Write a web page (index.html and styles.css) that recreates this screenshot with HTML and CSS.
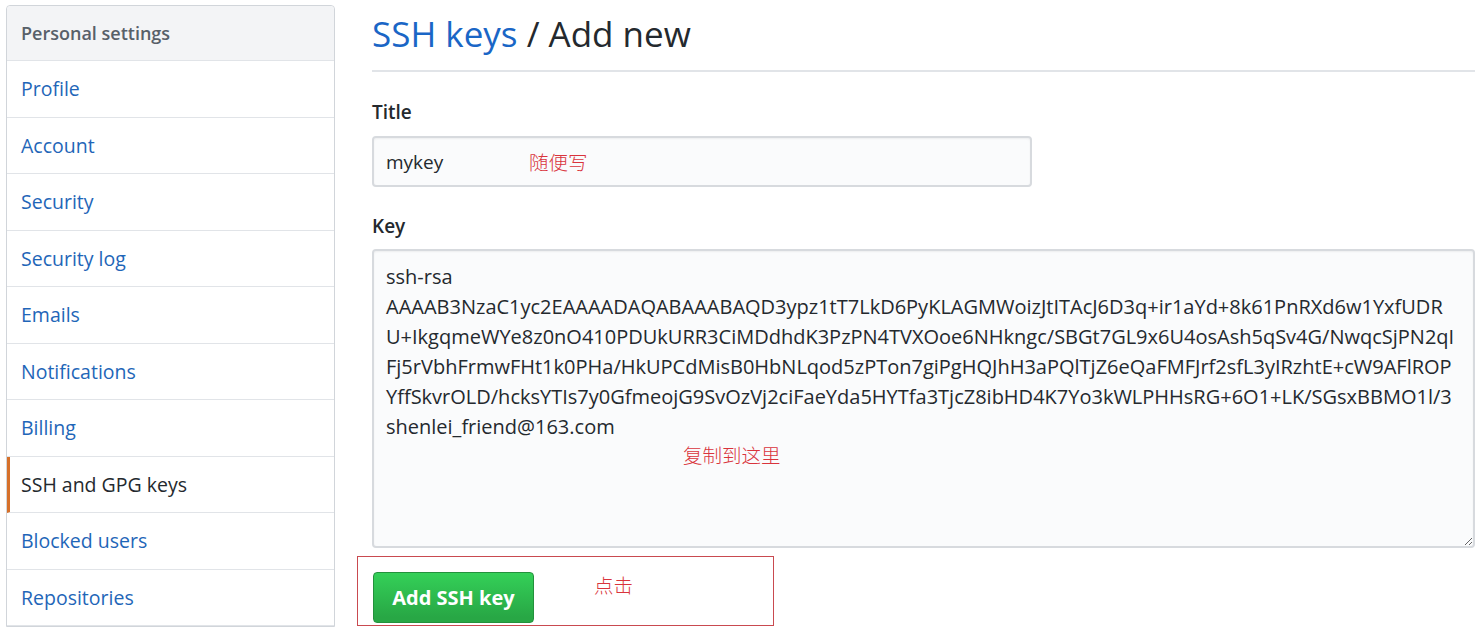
FILE: index.html
```html
<!DOCTYPE html>
<html lang="en">
<head>
    <meta charset="UTF-8">
    <title>SSH keys / Add new</title>
    <link rel="stylesheet" href="styles.css">
</head>
<body>
    <div class="layout">
        <nav class="sidebar">
            <div class="sidebar-head">Personal settings</div>
            <a class="menu-item" href="#">Profile</a>
            <a class="menu-item" href="#">Account</a>
            <a class="menu-item" href="#">Security</a>
            <a class="menu-item" href="#">Security log</a>
            <a class="menu-item" href="#">Emails</a>
            <a class="menu-item" href="#">Notifications</a>
            <a class="menu-item" href="#">Billing</a>
            <a class="menu-item selected" href="#">SSH and GPG keys</a>
            <a class="menu-item" href="#">Blocked users</a>
            <a class="menu-item" href="#">Repositories</a>
        </nav>

        <main class="content">
            <h1 class="page-title"><a href="#">SSH keys</a> / Add new</h1>

            <form>
                <label class="field-label" for="title">Title</label>
                <div class="field">
                    <input id="title" class="input-title" type="text" value="mykey">
                    <span class="note note-title">随便写</span>
                </div>

                <label class="field-label label-key" for="key">Key</label>
                <div class="field field-key">
                    <textarea id="key" class="input-key">ssh-rsa
AAAAB3NzaC1yc2EAAAADAQABAAABAQD3ypz1tT7LkD6PyKLAGMWoizJtITAcJ6D3q+ir1aYd+8k61PnRXd6w1YxfUDR
U+IkgqmeWYe8z0nO410PDUkURR3CiMDdhdK3PzPN4TVXOoe6NHkngc/SBGt7GL9x6U4osAsh5qSv4G/NwqcSjPN2qI
Fj5rVbhFrmwFHt1k0PHa/HkUPCdMisB0HbNLqod5zPTon7giPgHQJhH3aPQlTjZ6eQaFMFJrf2sfL3yIRzhtE+cW9AFlROP
YffSkvrOLD/hcksYTIs7y0GfmeojG9SvOzVj2ciFaeYda5HYTfa3TjcZ8ibHD4K7Yo3kWLPHHsRG+6O1+LK/SGsxBBMO1l/3
shenlei_friend@163.com</textarea>
                    <span class="note note-key">复制到这里</span>
                </div>

                <div class="submit-row">
                    <button type="button" class="btn-primary">Add SSH key</button>
                    <span class="note note-click">点击</span>
                </div>
            </form>
        </main>
    </div>
</body>
</html>
```

FILE: styles.css
```css
body {
    margin: 0;
    font-family: "Open Sans", "Noto Sans", sans-serif;
    color: #24292e;
    background: #fff;
    overflow: hidden;
}

.layout {
    display: flex;
    padding: 5px 7px 0 6px;
}

/* left menu */
.sidebar {
    width: 327px;
    flex: none;
    border: 1px solid #d1d5da;
    border-radius: 4px 4px 0 0;
    display: flex;
    flex-direction: column;
}

.sidebar-head {
    height: 54px;
    display: flex;
    align-items: center;
    padding-left: 14px;
    background: #f3f4f6;
    border-bottom: 1px solid #e1e4e8;
    color: #586069;
    font-size: 18px;
    font-weight: 600;
    border-radius: 4px 4px 0 0;
}

.menu-item {
    height: 55.5px;
    display: flex;
    align-items: center;
    padding-left: 14px;
    border-bottom: 1px solid #e1e4e8;
    color: #1f66b8;
    font-size: 19.5px;
    text-decoration: none;
}

.menu-item.selected {
    color: #24292e;
    padding-left: 11px;
    border-left: 3px solid #d6702a;
}

/* main column */
.content {
    flex: 1;
    margin-left: 37px;
}

.page-title {
    margin: 0;
    height: 65px;
    font-size: 35px;
    font-weight: 400;
    line-height: 58px;
    border-bottom: 2px solid #e1e4e8;
    color: #24292e;
}

.page-title a {
    color: #1a66c6;
    text-decoration: none;
}

.field-label {
    display: block;
    margin-top: 26px;
    font-size: 19px;
    font-weight: 600;
    line-height: 28px;
}

.field {
    position: relative;
    margin-top: 10px;
}

.label-key {
    margin-top: 25px;
}

.field-key {
    margin-top: 9px;
}

.input-title,
.input-key {
    box-sizing: border-box;
    border: 2px solid #d7dade;
    border-radius: 4px;
    background: #fafbfc;
    font-family: inherit;
    color: #24292e;
    box-shadow: inset 0 1px 2px rgba(27, 31, 35, 0.06);
}

.input-title {
    display: block;
    width: 660px;
    height: 51px;
    padding: 0 12px;
    font-size: 19px;
}

.input-key {
    display: block;
    width: 100%;
    height: 299px;
    padding: 11px 6px 11px 12px;
    font-size: 20px;
    line-height: 30px;
    resize: vertical;
}

/* red notes drawn over the form */
.note {
    color: #d9343c;
    font-family: "Noto Sans CJK SC", sans-serif;
    font-size: 19.5px;
    font-weight: 300;
    line-height: 28px;
}

.note-title {
    position: absolute;
    left: 157px;
    top: 12px;
}

.note-key {
    position: absolute;
    left: 311px;
    top: 192px;
}

.submit-row {
    display: flex;
    align-items: flex-start;
    box-sizing: border-box;
    width: 417px;
    height: 70px;
    margin-top: 8px;
    margin-left: -15px;
    padding: 15px 0 0 15px;
    border: 1px solid #c94a50;
}

.btn-primary {
    width: 161px;
    height: 51px;
    border: 1px solid #23913c;
    border-radius: 4px;
    background: linear-gradient(#34d058, #28a745 90%);
    color: #fff;
    font-family: inherit;
    font-size: 20px;
    font-weight: 700;
    cursor: pointer;
}

.note-click {
    margin-left: 60px;
    margin-top: -1px;
}
```
